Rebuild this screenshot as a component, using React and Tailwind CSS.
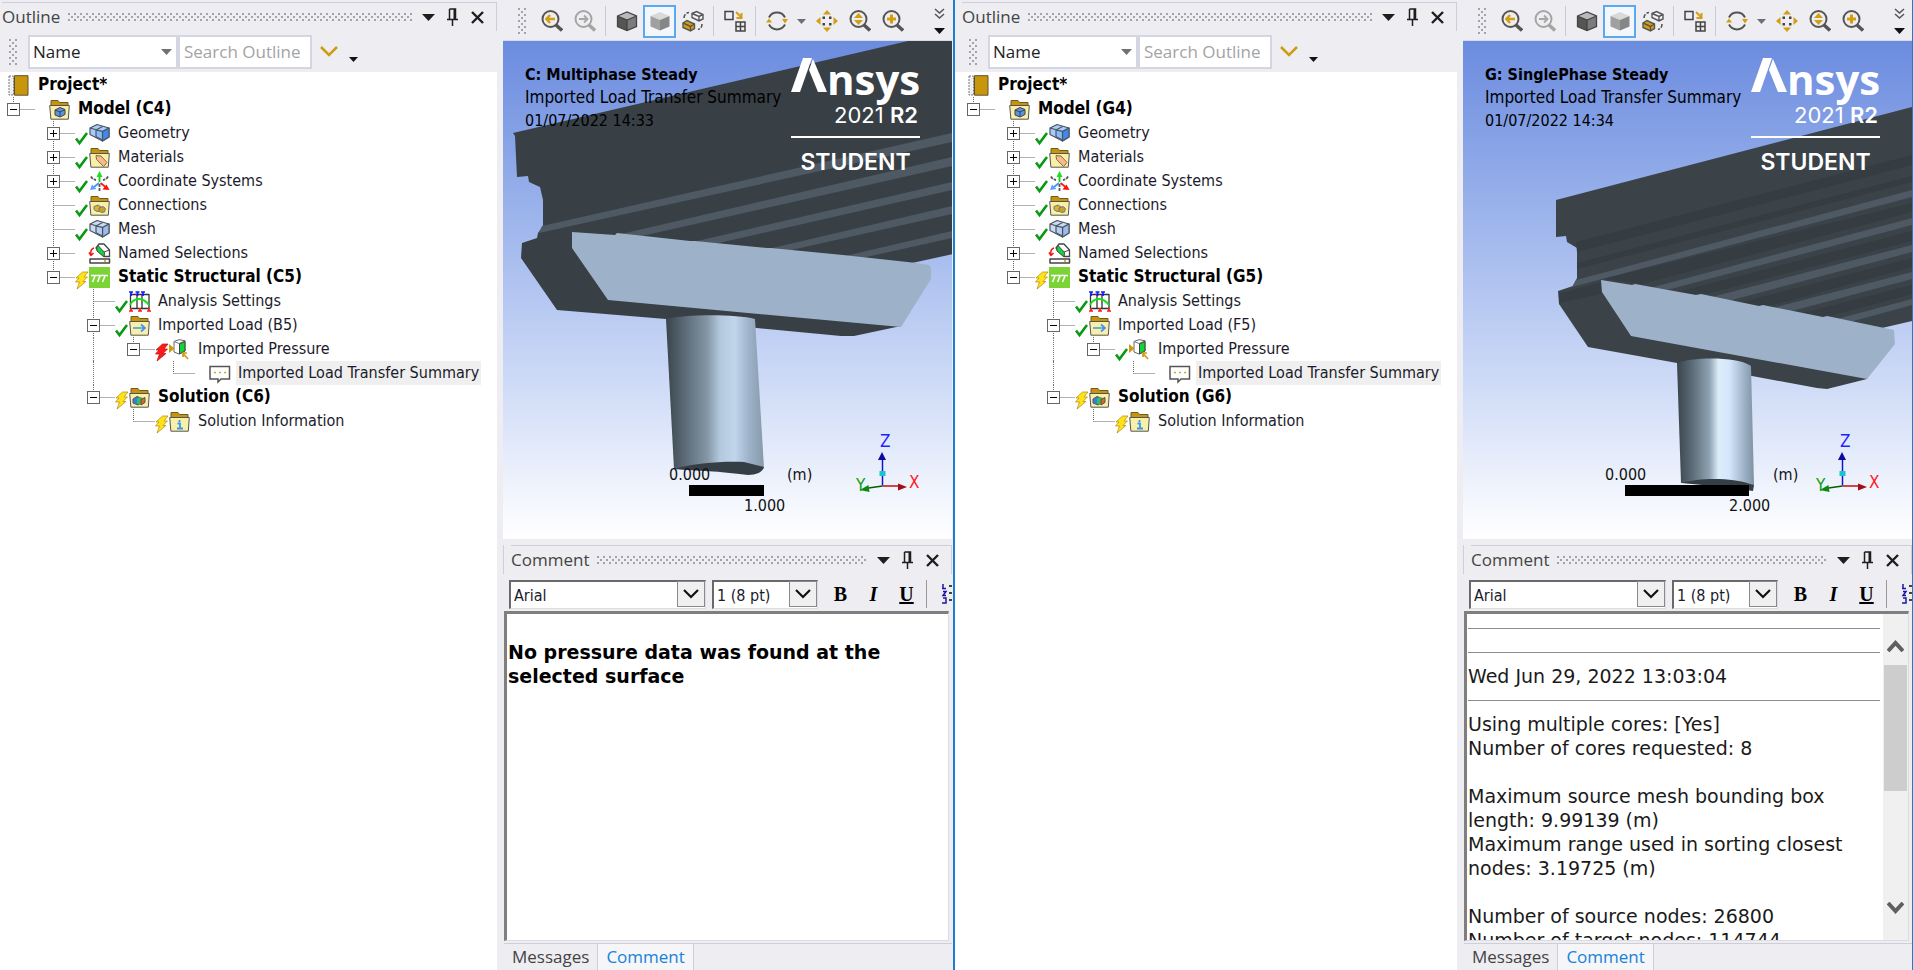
/**
 * App.jsx
 *
 * Two Mechanical sessions side by side: outline tree, graphics view
 * and the comment panel of the selected transfer summary.
 */

const GRIP =
  "bg-[radial-gradient(circle_at_1px_1px,#a3a3ab_1px,transparent_1px),radial-gradient(circle_at_4px_4px,#a3a3ab_1px,transparent_1px)] bg-[length:6px_6px]";

const SESSIONS = [
  {
    id: "C",
    model: "Model (C4)",
    structural: "Static Structural (C5)",
    load: "Imported Load (B5)",
    loadStatus: "failed",
    solution: "Solution (C6)",
    title: "C: Multiphase Steady",
    time: "01/07/2022 14:33",
  },
  {
    id: "G",
    model: "Model (G4)",
    structural: "Static Structural (G5)",
    load: "Imported Load (F5)",
    loadStatus: "ok",
    solution: "Solution (G6)",
    title: "G: SinglePhase Steady",
    time: "01/07/2022 14:34",
  },
];

// depth 1 hangs under the project; "rails" lists the ancestor cells that
// still carry a vertical line past the row
const buildRows = (s) => [
  { label: s.model, depth: 1, icon: "model", box: "-", last: true, bold: true },
  { label: "Geometry", depth: 2, icon: "geometry", box: "+", status: "ok" },
  { label: "Materials", depth: 2, icon: "materials", box: "+", status: "ok" },
  { label: "Coordinate Systems", depth: 2, icon: "coords", box: "+", status: "ok" },
  { label: "Connections", depth: 2, icon: "connections", status: "ok" },
  { label: "Mesh", depth: 2, icon: "mesh", status: "ok" },
  { label: "Named Selections", depth: 2, icon: "named", box: "+" },
  { label: s.structural, depth: 2, icon: "structural", box: "-", status: "bolt", last: true, bold: true },
  { label: "Analysis Settings", depth: 3, icon: "settings", status: "ok" },
  { label: s.load, depth: 3, icon: "load", box: "-", status: "ok" },
  { label: "Imported Pressure", depth: 4, icon: "pressure", box: "-", status: s.loadStatus, last: true, rails: [3] },
  { label: "Imported Load Transfer Summary", depth: 5, icon: "comment", last: true, rails: [3], selected: true },
  { label: s.solution, depth: 3, icon: "solution", box: "-", status: "bolt", last: true, bold: true },
  { label: "Solution Information", depth: 4, icon: "info", status: "bolt", last: true },
];

/* ---------- tree icons ---------- */

function Folder({ children }) {
  return (
    <>
      <path d="M2 9V1.500h7l1.500 2H19V9z" fill="#c8940a" stroke="#6b5a2a" />
      <path d="M.7 6.500h19.600l-1 13.700H1.900z" fill="#f8f0a8" stroke="#555" />
      {children}
    </>
  );
}

function Blocks({ a, b, c }) {
  return (
    <g stroke="#4b5563" strokeWidth="1.200" strokeLinejoin="round">
      <path d="M1 5l7-3.500 12 3.500v9l-6.500 4L1 11.500z" fill={a} />
      <path d="M1 5l12.500 3.500L20 5M13.500 8.500V18" fill="none" />
      <path d="M13.500 8.500L20 5v9l-6.500 4z" fill={c} />
      <path d="M7 7v6.800l6.500 3.200V8.500z" fill={b} />
      <path d="M7 7l6.500-3.500" fill="none" />
    </g>
  );
}

function TreeIcon({ name }) {
  const art = {
    model: (
      <Folder>
        <path d="M6 11l5-2.500 5 2v5L11 18l-5-2z" fill="#5b93e6" stroke="#444" />
        <path d="M6 11l5 2 5-2.500M11 13v5" fill="none" stroke="#444" />
      </Folder>
    ),
    geometry: <Blocks a="#a9ccf7" b="#8ab9f5" c="#3f8ae8" />,
    mesh: <Blocks a="#c8dbf3" b="#b4cdf0" c="#9cbbe6" />,
    materials: (
      <Folder>
        <path d="M7 8.500l5 .5 6 6.500-3.500 4-7-7z" fill="#f6bd8a" stroke="#8a6a4a" />
      </Folder>
    ),
    connections: (
      <Folder>
        <path d="M5 11.500l4-1.500 3 2-1 4-3 .5-3-2z" fill="#d9b43a" stroke="#777" />
        <path d="M10 13l4-1.500 2.500 2-1 3.500-3 .5-2.500-1.500z" fill="#c9a227" stroke="#777" />
      </Folder>
    ),
    coords: (
      <g fill="none" strokeWidth="1.800">
        <path d="M10.500 11V5" stroke="#19c519" />
        <path d="M10.500 0l3 6h-6z" fill="#19e019" />
        <path d="M10 12l-5 4" stroke="#4a90f0" />
        <path d="M1 19l2-5.500 4.500 4.500z" fill="#5aa0ff" />
        <path d="M11.500 12l5 4" stroke="#f02020" />
        <path d="M20.500 19l-7-.5 4-5z" fill="#ff1010" />
        <path d="M2 5.500c1 2 2.500 3 5 3.500M19 5.500c-1 2-2.500 3-5 3.500M10.500 13v7" stroke="#555" strokeDasharray="3 1" />
      </g>
    ),
    named: (
      <g strokeLinejoin="round">
        <path d="M10 1h5l5.500 6v6.500h-5L7 5z" fill="#fff" stroke="#444" strokeWidth="1.300" />
        <path d="M7.500 4.500l2-1.500 6 6.500-.5 4.500L8 8z" fill="#12d43a" stroke="#444" />
        <path d="M15 9l5.500-2" stroke="#444" />
        <path d="M5 5c-3 1-3.500 4-3 6.500M0 9.500l2 3 2.500-2.500" fill="none" stroke="#f01818" strokeWidth="1.500" />
        <path d="M1 16h19.500v4H1z" fill="#fff" stroke="#444" strokeWidth="1.500" />
        <path d="M15 18h2" stroke="#c8940a" strokeWidth="1.500" />
      </g>
    ),
    structural: (
      <>
        <path d="M0 0h21v21H0z" fill="#7bd335" />
        <path d="M2 8.500h17M6 9l-2.500 6M11 9l-2.500 6M16 9l-2.500 6" stroke="#fff" strokeWidth="1.500" />
      </>
    ),
    settings: (
      <g fill="none">
        <path d="M1.500 3v15M8 3v15M13 3v15M20 3v15M1 3.500h19M1 17.500h19" stroke="#333" strokeWidth="1.300" />
        <path d="M1 14c4-8 13-8 19 0" stroke="#14e014" strokeWidth="1.800" />
        <path d="M0 1h4M6.500 1h4M12 1h4M2 1v4M8.500 1v4M14 1v4" stroke="#1818ff" strokeWidth="1.700" />
        <path d="M0 20h4M9 20h4M18 20h4M2 17v3M11 17v3M20 17v3" stroke="#ff1818" strokeWidth="1.700" />
      </g>
    ),
    load: (
      <Folder>
        <path d="M4 13h11M12 9.500l4 3.500-4 3.500" fill="none" stroke="#3f95ee" strokeWidth="1.700" />
      </Folder>
    ),
    pressure: (
      <g>
        <path d="M5 2.500L10 .7l6 1V12l-6 3-5-2z" fill="#fff" stroke="#666" />
        <path d="M5 2.500l5 2 6-2.500" fill="none" stroke="#777" />
        <path d="M10.500 5L16 2.500V12l-5.500 3z" fill="#14d434" stroke="#444" />
        <path d="M0 5l5.500 4.500L0 14z" fill="#d09a14" />
        <path d="M19 20l-4.500-5M14 18v-4h4" fill="none" stroke="#d09a14" strokeWidth="1.700" />
      </g>
    ),
    comment: (
      <>
        <path d="M1 3.500h19.500v12.500H12l-3 3v-3H1z" fill="#fff" stroke="#555" strokeWidth="1.500" />
        <path d="M5 9.500h2M10 9.500h2M15 9.500h2" stroke="#d7a52a" strokeWidth="1.500" />
      </>
    ),
    solution: (
      <Folder>
        <path d="M4 12l4-2.500 4 1.500v5l-3 2-5-2z" fill="#3b7ddd" stroke="#555" />
        <path d="M8 12l3-2 3 1v5l-3 2-3-1.500z" fill="#2fc45a" />
        <path d="M12 12.500l4-2v5l-4 2.500z" fill="#e2622a" stroke="#555" />
      </Folder>
    ),
    info: (
      <Folder>
        <path d="M10.500 9v2M8.500 12.500h2.500v5M8 17.500h6" fill="none" stroke="#3f95ee" strokeWidth="1.800" />
      </Folder>
    ),
  };
  return (
    <svg className="size-[21px] shrink-0 overflow-visible" viewBox="0 0 21 21" aria-hidden="true">
      {art[name]}
    </svg>
  );
}

function StatusMark({ kind }) {
  if (kind === "ok") {
    return <path d="M32 17.500l3.500 4.500L43 12" fill="none" stroke="#0a9a12" strokeWidth="2.600" />;
  }
  const fill = kind === "failed" ? "#ff1a1a" : "#ffe21a";
  const stroke = kind === "failed" ? "#b01010" : "#b08a10";
  return (
    <path
      d="M38.500 7h5.500L40 12h3.500l-4.500 4.500h3L33 24l2.500-7H31.500l3.500-4h-3z"
      fill={fill}
      stroke={stroke}
      strokeWidth=".7"
    />
  );
}

function TreeRow({ row }) {
  const rails = row.rails || [];
  const cells = Array.from({ length: row.depth - 1 }, (_, i) => i + 1);
  return (
    <li className="flex h-6 items-center">
      {cells.map((level) => (
        <span key={level} className="flex h-6 w-10 shrink-0">
          {rails.includes(level) && <span className="ml-[9px] border-l border-dotted border-[#777]" />}
        </span>
      ))}
      <span className="relative h-6 w-10 shrink-0">
        <svg className="absolute inset-0 overflow-visible" width="40" height="24" aria-hidden="true">
          <path
            d={row.last ? "M9.500 0v12.500M9.500 12.500h22" : "M9.500 0v24M9.500 12.500h22"}
            fill="none"
            stroke="#666"
            strokeDasharray="1 1"
          />
          {row.status && <StatusMark kind={row.status} />}
        </svg>
        {row.box && (
          <button
            type="button"
            aria-label={row.label}
            aria-expanded={row.box === "-"}
            className="absolute top-[6px] left-[3px] size-[13px] border border-[#666] bg-white"
          >
            <span className="absolute top-[5px] left-[2px] h-px w-[7px] bg-black" />
            {row.box === "+" && <span className="absolute top-[2px] left-[5px] h-[7px] w-px bg-black" />}
          </button>
        )}
      </span>
      <span className="ml-[5px] flex">
        <TreeIcon name={row.icon} />
      </span>
      <span
        className={
          "ml-1.5 flex h-6 items-center px-0.5 whitespace-nowrap " +
          (row.bold ? "text-[17px] font-bold text-black " : "text-[#1b1b2b] ") +
          (row.selected ? "bg-[#efefef]" : "")
        }
      >
        {row.label}
      </span>
    </li>
  );
}

/* ---------- panels ---------- */

function PanelHeader({ title }) {
  return (
    <header className="flex h-[29px] shrink-0 items-center border-t border-r border-[#ccceDB] pr-1.5 text-[17px] text-[#444]">
      <h2>{title}</h2>
      <span className={"mr-1 ml-2 h-2 flex-1 " + GRIP} />
      <button type="button" aria-label="Window position" className="flex w-6 justify-center">
        <svg width="13" height="7"><path d="M0 0h13L6.500 7z" fill="#1e1e1e" /></svg>
      </button>
      <button type="button" aria-label="Auto hide" className="flex w-6 justify-center">
        <svg width="13" height="18" fill="none" stroke="#1e1e1e" strokeWidth="1.500">
          <path d="M3.500 1h6v10M3.500 1v10M1 11.500h11M6.500 12v6" />
          <path d="M8.500 1v10" strokeWidth="2" />
        </svg>
      </button>
      <button type="button" aria-label="Close" className="flex w-[26px] justify-center">
        <svg width="13" height="13" stroke="#1e1e1e" strokeWidth="2.400"><path d="M1 1l11 11M12 1L1 12" /></svg>
      </button>
    </header>
  );
}

function Outline({ session, inset }) {
  return (
    <section
      aria-label="Outline"
      className={"flex shrink-0 flex-col pt-0.5 " + (inset ? "w-[502px]" : "w-[497px]")}
    >
      <div className={inset ? "pl-[7px]" : "pl-0.5"}>
        <PanelHeader title="Outline" />
      </div>
      <div className={"flex h-[41px] items-center " + (inset ? "pl-[14px]" : "pl-[9px]")}>
        <span className={"mr-[11px] h-[26px] w-2 " + GRIP} />
        <div className="relative">
          <select
            aria-label="Filter by"
            className="h-[34px] w-[150px] appearance-none border-2 border-[#d5d6e4] bg-white pl-[3px] text-[17px] text-[#1e1e1e]"
          >
            <option>Name</option>
          </select>
          <svg className="pointer-events-none absolute top-[14px] right-[6px]" width="11" height="6">
            <path d="M0 0h11L5.500 6z" fill="#717171" />
          </svg>
        </div>
        <input
          aria-label="Search Outline"
          placeholder="Search Outline"
          className="h-[34px] w-[134px] border-2 border-[#d5d6e4] bg-white pl-1 text-[17px] placeholder:text-[#a2a4a5]"
        />
        <button type="button" aria-label="Expand" className="ml-2">
          <svg width="18" height="11" fill="none" stroke="#cf9b12" strokeWidth="2.500"><path d="M1 1l8 8 8-8" /></svg>
        </button>
        <button type="button" aria-label="More" className="mt-4 ml-[11px]">
          <svg width="9" height="5"><path d="M0 0h9L4.500 5z" fill="#111" /></svg>
        </button>
      </div>
      <div className={"flex-1 bg-white pt-px font-['DejaVu_Sans_Condensed','DejaVu_Sans',sans-serif] text-[16px] " + (inset ? "pl-[9px]" : "pl-1")}>
        <div className="flex h-6 items-center">
          <svg className="ml-1 size-[21px] shrink-0" viewBox="0 0 21 21" aria-hidden="true">
            <path d="M6.500 .7h13.500v19.500H6.500z" fill="#c8960c" stroke="#5d5231" />
            <path d="M1 1h4.500v19H1z" fill="#f0f0f0" stroke="#777" strokeDasharray="2 1" />
          </svg>
          <span className="ml-[9px] text-[17px] font-bold text-black">Project*</span>
        </div>
        <ul>
          {buildRows(session).map((row) => (
            <TreeRow key={row.label} row={row} />
          ))}
        </ul>
      </div>
    </section>
  );
}

/* ---------- graphics toolbar ---------- */

function Lens({ children, muted }) {
  return (
    <g fill="none" stroke={muted ? "#a5a5a5" : "#555"} strokeWidth="2">
      <circle cx="9.500" cy="9" r="8" />
      <path d="M15 15l6 5.500" strokeWidth="3.500" />
      {children}
    </g>
  );
}

function Cube({ top, left, right }) {
  return (
    <>
      <path d="M1.500 6L11 2l9.500 4-9.500 4z" fill={top} />
      <path d="M1.500 6L11 10v10.500l-9.500-4z" fill={left} />
      <path d="M20.500 6L11 10v10.500l9.500-4z" fill={right} />
    </>
  );
}

function ToolButton({ label, active, children }) {
  return (
    <button
      type="button"
      aria-label={label}
      className={
        "flex size-[33px] shrink-0 items-center justify-center " +
        (active ? "border-2 border-[#5aa9f0] bg-[#f3f6fb]" : "")
      }
    >
      <svg className="size-[22px] shrink-0" viewBox="0 0 22 22">{children}</svg>
    </button>
  );
}

function Separator() {
  return <span className="mx-1 h-[30px] w-px shrink-0 bg-[#c9cad8]" />;
}

function GraphicsToolbar() {
  return (
    <div role="toolbar" aria-label="Graphics" className="mt-0.5 flex h-[39px] shrink-0 items-center overflow-hidden border-b border-[#d8d9ea] pl-[15px]">
      <span className={"mr-[9px] h-[26px] w-2 shrink-0 " + GRIP} />
      <ToolButton label="Previous view">
        <Lens><path d="M5 9h9M9 5L5.500 9 9 13" stroke="#d39e10" strokeWidth="2.600" /></Lens>
      </ToolButton>
      <ToolButton label="Next view">
        <Lens muted><path d="M5 9h9M10 5.500L13.500 9 10 12.500" strokeWidth="1.800" /></Lens>
      </ToolButton>
      <Separator />
      <ToolButton label="Shaded with edges">
        <Cube top="#b9b9b9" left="#555" right="#7b7b7b" />
        <path d="M1.500 6L11 2l9.500 4v10.500L11 20.500l-9.500-4zM1.500 6L11 10l9.500-4M11 10v10.500" fill="none" stroke="#444" strokeWidth="1.300" />
      </ToolButton>
      <ToolButton label="Shaded" active>
        <Cube top="#d9d9d9" left="#a0a0a0" right="#868686" />
      </ToolButton>
      <ToolButton label="Swap bodies">
        <path d="M10 3.500l4.500-2 6.500 3V9l-4 2-7-3.500zM10 3.500l7 3 4-2M17 6.500V11" fill="#f4f4f4" stroke="#555" strokeWidth="1.400" />
        <path d="M1 13l4-2.500 7.500 3.500v4.500L8.500 21 1 17.500z" fill="#d39e10" stroke="#555" strokeWidth="1.400" />
        <path d="M1 13l7.500 3.500 4-2.500M8.500 16.500V21" fill="none" stroke="#555" strokeWidth="1.400" />
        <path d="M2 8c0-3 2-5 5-5.500M20 14c0 3-1 4.500-4 5.500" fill="none" stroke="#555" strokeWidth="1.600" strokeDasharray="4 1.500" />
      </ToolButton>
      <Separator />
      <ToolButton label="Viewports">
        <path d="M1 1.500h8v8H1zM12 12h9v9h-9zM16.500 12v9M12 16.500h9" fill="none" stroke="#444" strokeWidth="1.500" />
        <path d="M12 2l5 5M17.500 3v5h-5" fill="none" stroke="#d39e10" strokeWidth="2" />
      </ToolButton>
      <Separator />
      <ToolButton label="Rotate">
        <path d="M3 7.500a9 9 0 0 1 16 0M19 14.500a9 9 0 0 1-16 0" fill="none" stroke="#555" strokeWidth="2" />
        <path d="M0 12.500l3-4 3 4zM16 9l3 4.500L22 9z" fill="#d39e10" />
      </ToolButton>
      <button type="button" aria-label="Rotate options" className="flex w-[17px] shrink-0 justify-center">
        <svg width="9" height="5"><path d="M0 0h9L4.500 5z" fill="#6d6d7a" /></svg>
      </button>
      <ToolButton label="Pan">
        <path d="M11 0l4 4.500H7zM11 22l4-4.500H7zM0 11l4.500-4v8zM22 11l-4.500-4v8z" fill="#d39e10" />
        <path d="M6.500 6.500h2.500v2.500H6.500zM13 6.500h2.500v2.500H13zM6.500 13h2.500v2.500H6.500zM13 13h2.500v2.500H13z" fill="#444" />
      </ToolButton>
      <ToolButton label="Zoom">
        <Lens><path d="M9.500 3l4.500 5h-9zM9.500 15l4.500-5h-9z" fill="#d39e10" stroke="none" /></Lens>
      </ToolButton>
      <ToolButton label="Zoom in">
        <Lens><path d="M9.500 4.500v9M5 9h9" stroke="#d39e10" strokeWidth="3" /></Lens>
      </ToolButton>
      <button type="button" aria-label="More tools" className="mr-[7px] ml-auto shrink-0">
        <svg width="11" height="26" fill="none" stroke="#555" strokeWidth="1.500">
          <path d="M1 1l4.500 4L10 1M1 6l4.500 4L10 6" />
          <path d="M0 20h11l-5.500 6z" fill="#111" stroke="none" />
        </svg>
      </button>
    </div>
  );
}

/* ---------- 3D scenes ---------- */

function Triad() {
  return (
    <g fontSize="17" strokeWidth="1.500" fill="none">
      <path d="M379.500 444.500V418" stroke="#1414d0" />
      <path d="M379 411l4 8h-8z" fill="#0a0aa0" />
      <path d="M376.500 430h6v5h-6z" fill="#17c4d4" />
      <path d="M379.500 445H396" stroke="#c01010" />
      <path d="M404 446l-9-3.500v7z" fill="#a01010" />
      <path d="M379.500 445l-14 2" stroke="#0a5a0a" />
      <path d="M357 449l8.500-5 1 7z" fill="#0a8a0a" />
      <text x="377" y="406" fill="#1e1eff">Z</text>
      <text x="406" y="447" fill="#ff2020">X</text>
      <text x="353" y="450" fill="#12a012">Y</text>
    </g>
  );
}

function SceneC() {
  return (
    <>
      <defs>
        <linearGradient id="pierC">
          <stop offset="0" stopColor="#3a444c" />
          <stop offset=".2" stopColor="#5d6c78" />
          <stop offset=".42" stopColor="#8496a5" />
          <stop offset=".55" stopColor="#b3c8dc" />
          <stop offset=".7" stopColor="#c1d6ec" />
          <stop offset=".85" stopColor="#9db2c8" />
          <stop offset="1" stopColor="#8799aa" />
        </linearGradient>
      </defs>
      <path
        d="M449 0H405L10 92l2 3 2 41 11-1 1 6 11 5 3 13v26l-5 7-1 5-15 5-1 15 36 52 109 9 91 9 84 8h13l47-10 11-63 41-9z"
        fill="#383f45"
      />
      <g fill="#4f5963">
        <path d="M39 185L449 92v9L36 192z" />
        <path d="M114 194l335-78v9l-319 72z" />
        <path d="M190 201l259-60v8l-242 55z" />
        <path d="M265 208l184-43v8l-165 37z" />
        <path d="M342 215l107-25v7l-90 20z" />
      </g>
      <path
        d="M69 191l43 3 2-2 73 8h5l72 7h4l72 7 69 7.500 17 2.500 2 3v11l-30 48-293-27-36-52z"
        fill="#9db2c9"
      />
      <path d="M163 278c20-5 70-5 89 0l9 149-90 1z" fill="url(#pierC)" />
      <path d="M171 428c20-6 50-8 70-7l20 5c-1 5-8 8-16 8-30-4-50-4-74-6z" fill="#363e45" />
      <path d="M186 444h75v11h-75z" fill="#000" />
      <g fontSize="16" fill="#111">
        <text x="166" y="439">0.000</text>
        <text x="241" y="470">1.000</text>
        <text x="284" y="439">(m)</text>
      </g>
    </>
  );
}

function SceneG() {
  return (
    <>
      <defs>
        <linearGradient id="pierG">
          <stop offset="0" stopColor="#3a444c" />
          <stop offset=".2" stopColor="#5d6c78" />
          <stop offset=".42" stopColor="#8fa2b1" />
          <stop offset=".54" stopColor="#dcedfa" />
          <stop offset=".68" stopColor="#d3e6fb" />
          <stop offset=".85" stopColor="#a3b8ce" />
          <stop offset="1" stopColor="#7f91a2" />
        </linearGradient>
      </defs>
      <path
        d="M449 66L93 159v37l10-1 1 6 10 6v30l-4 8-15 5 1 13 29 43 89 16 75 13 65 12 10 1 40-10 15-51 30-7z"
        fill="#3b4349"
      />
      <g fill="#353c42">
        <path d="M113 201L449 114v10L114 211z" />
        <path d="M114 228l335-87v-6L114 222z" />
        <path d="M140 238l309-76v9l-270 72z" />
        <path d="M215 251l234-61v10l-210 54z" />
        <path d="M275 262l174-45v9l-150 41z" />
        <path d="M340 272l109-28v9l-90 24z" />
        <path d="M96 262v-9l42-12v12z" />
      </g>
      <g fill="#4f5963">
        <path d="M113 239L449 149v7L109 246z" />
        <path d="M187 247l262-70v7l-245 65z" />
        <path d="M245 257l204-53v7l-184 49z" />
        <path d="M305 268l144-37v7l-124 33z" />
        <path d="M370 279l79-21v6l-62 17z" />
      </g>
      <path
        d="M138 239l31 5 3-1 61 11 5-1 58 12 4-1 60 12 4-1 55 11.500 12 2.500 1 14-28 35-236-43-29-44z"
        fill="#9db2c9"
      />
      <path d="M214 322c15-6 60-7 74 3l3 119-73-2z" fill="url(#pierG)" />
      <path d="M219 442c15-5 50-6 68 1l4 1-1 6-20-3z" fill="#363e45" />
      <path d="M162 444h124v11H162z" fill="#000" />
      <g fontSize="16" fill="#111">
        <text x="142" y="439">0.000</text>
        <text x="266" y="470">2.000</text>
        <text x="310" y="439">(m)</text>
      </g>
    </>
  );
}

function Logo() {
  return (
    <div className="absolute top-[15px] right-8 w-[129px] text-white">
      <div className="flex h-9 items-end">
        <svg className="h-[34px] w-9 shrink-0" viewBox="0 0 36 34" aria-hidden="true">
          <path d="M12 0h9L9 34H0z" fill="#fff" />
          <path d="M22 1l14 33h-9L18 12z" fill="#fff" />
        </svg>
        <span className="font-['Open_Sans',sans-serif] text-[42px] leading-[26px] font-bold">nsys</span>
      </div>
      <p className="mt-[11px] pr-0.5 text-right font-['Inter',sans-serif] text-[22px] leading-6">
        2021 <span className="font-semibold">R2</span>
      </p>
      <div className="mt-[9px] h-0.5 bg-white" />
      <p className="mt-3 text-center font-['Inter',sans-serif] text-[23px] leading-6 font-semibold">STUDENT</p>
    </div>
  );
}

function Viewport({ session }) {
  return (
    <section
      aria-label="Graphics"
      className="relative h-[498px] shrink-0 overflow-hidden bg-linear-to-b from-[#6b8bde] to-white font-['DejaVu_Sans_Condensed','DejaVu_Sans',sans-serif]"
    >
      <svg className="absolute inset-0 size-full" viewBox="0 0 449 498" preserveAspectRatio="xMaxYMin slice">
        {session.id === "C" ? <SceneC /> : <SceneG />}
        <Triad />
      </svg>
      <div className="absolute top-[22px] left-[22px] text-[16px] leading-[23px] whitespace-nowrap text-black">
        <p className="font-bold">{session.title}</p>
        <p className="text-[17px]">Imported Load Transfer Summary</p>
        <p>{session.time}</p>
      </div>
      <Logo />
    </section>
  );
}

/* ---------- comment panel ---------- */

function FormatSelect({ label, value, width }) {
  return (
    <div className={"relative mr-[6px] h-[29px] shrink-0 " + width}>
      <select
        aria-label={label}
        className="size-full appearance-none border-t-2 border-r border-b border-l-2 border-t-[#696969] border-r-[#ddd] border-b-[#ddd] border-l-[#696969] bg-white pt-0.5 pl-[3px] font-['DejaVu_Sans_Condensed',sans-serif] text-[16px] font-normal text-[#1b1b2b]"
      >
        <option>{value}</option>
      </select>
      <span className="pointer-events-none absolute top-0.5 right-px flex h-[26px] w-7 items-center justify-center border border-[#8a8a8a] bg-[#f0f0f0]">
        <svg width="16" height="10" fill="none" stroke="#111" strokeWidth="2.200"><path d="M1 1l7 7 7-7" /></svg>
      </span>
    </div>
  );
}

function FormatBar() {
  return (
    <div role="toolbar" aria-label="Text format" className="flex h-[37px] shrink-0 items-center overflow-hidden pt-0.5 pl-[6px] font-['Liberation_Serif',serif] text-[20px] font-bold text-black">
      <FormatSelect label="Font" value="Arial" width="w-[197px]" />
      <FormatSelect label="Size" value="1 (8 pt)" width="w-[106px]" />
      <button type="button" aria-label="Bold" className="w-[33px] shrink-0">B</button>
      <button type="button" aria-label="Italic" className="w-[33px] shrink-0 italic">I</button>
      <button type="button" aria-label="Underline" className="w-[33px] shrink-0 underline">U</button>
      <span className="mr-[14px] ml-[3px] h-7 w-px shrink-0 bg-[#999]" />
      <button type="button" aria-label="Numbered list" className="shrink-0">
        <svg width="28" height="22">
          <path d="M2 1v5M1 5.500h4M2 8.500h3l-3 4h3M2 15h3v5H1" fill="none" stroke="#1818a0" strokeWidth="1.500" />
          <path d="M8 3h18M8 10h18M8 17h18" stroke="#444" strokeWidth="2" strokeDasharray="3 1" />
        </svg>
      </button>
    </div>
  );
}

function Rule() {
  return (
    <div className="flex h-6 items-center">
      <hr className="h-px flex-1 border-0 bg-[#8c8c8c]" />
    </div>
  );
}

function TransferLog() {
  return (
    <div className="flex min-h-0 flex-1">
      <div className="min-w-0 flex-1 overflow-hidden pt-0.5 pr-[3px] pl-px">
        <Rule />
        <Rule />
        <p>Wed Jun 29, 2022 13:03:04</p>
        <Rule />
        <p>Using multiple cores: [Yes]</p>
        <p className="mb-6">Number of cores requested: 8</p>
        <p>Maximum source mesh bounding box length: 9.99139 (m)</p>
        <p className="mb-6">Maximum range used in sorting closest nodes: 3.19725 (m)</p>
        <p>Number of source nodes: 26800</p>
        <p>Number of target nodes: 114744</p>
      </div>
      <div className="flex w-[25px] shrink-0 flex-col items-center bg-[#f0f0f0] pt-[26px] pb-[26px]">
        <svg className="shrink-0" width="17" height="12" fill="none" stroke="#606060" strokeWidth="4"><path d="M1 11l7.500-8 7.500 8" /></svg>
        <span className="mt-[13px] h-[126px] w-[23px] shrink-0 bg-[#cdcdcd]" />
        <svg className="mt-auto shrink-0" width="17" height="12" fill="none" stroke="#606060" strokeWidth="4"><path d="M1 1l7.500 8L16 1" /></svg>
      </div>
    </div>
  );
}

function CommentPanel({ session }) {
  return (
    <section aria-label="Comment" className="mt-[6px] flex min-h-0 flex-1 flex-col">
      <div className="border-l border-[#ccceDB] pl-[7px]">
        <PanelHeader title="Comment" />
      </div>
      <FormatBar />
      <div className="mr-[3px] ml-px flex min-h-0 flex-1 flex-col border-t-3 border-r border-b border-l-3 border-t-[#7f7f7f] border-r-[#ddd] border-b-[#ddd] border-l-[#7f7f7f] bg-white font-['DejaVu_Sans',sans-serif] text-[19px] leading-6 text-[#1a1a1a]">
        {session.id === "C" ? (
          <p className="pt-[26px] pl-px font-bold text-black">No pressure data was found at the selected surface</p>
        ) : (
          <TransferLog />
        )}
      </div>
      <nav className="mt-0.5 ml-px flex h-[27px] shrink-0 border-t border-[#ccceDB] text-[17px] leading-6">
        <button type="button" className="border-r border-[#ccceDB] px-2 text-[#444]">Messages</button>
        <button type="button" className="border-r border-[#ccceDB] bg-[#f6f6f8] px-2 text-[#1583d8]">Comment</button>
      </nav>
    </section>
  );
}

function Session({ session, inset }) {
  return (
    <div className={"flex min-h-0 min-w-0 border-[#1a7fd0] bg-[#eeeef2] " + (inset ? "border-r" : "border-r-2")}>
      <Outline session={session} inset={inset} />
      <div className={"ml-[6px] flex min-h-0 min-w-0 flex-1 flex-col " + (inset ? "" : "mr-px")}>
        <GraphicsToolbar />
        <Viewport session={session} />
        <CommentPanel session={session} />
      </div>
    </div>
  );
}

export default function App() {
  return (
    <main className="grid h-screen min-h-[800px] grid-cols-[955fr_958fr] grid-rows-[minmax(0,1fr)] overflow-hidden font-['Open_Sans','Noto_Sans',sans-serif]">
      {SESSIONS.map((session, index) => (
        <Session key={session.id} session={session} inset={index > 0} />
      ))}
    </main>
  );
}
